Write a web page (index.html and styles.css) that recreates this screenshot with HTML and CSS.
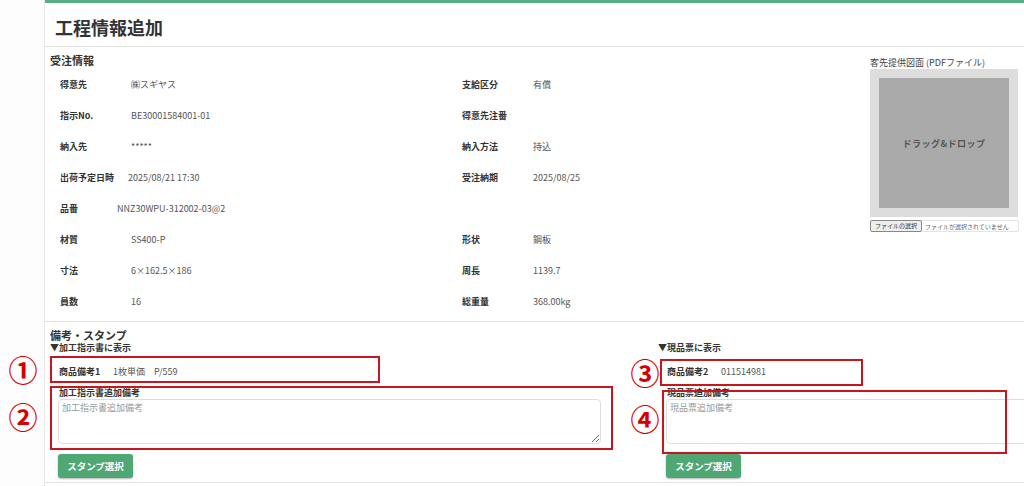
FILE: index.html
```html
<!DOCTYPE html>
<html lang="ja">
<head>
    <meta charset="UTF-8">
    <meta name="viewport" content="width=device-width, initial-scale=1.0">
    <title>工程情報追加</title>
    <link rel="stylesheet" href="styles.css">
</head>
<body>
<div class="page">
    <div class="sidebar"></div>

    <div class="main">
        <div class="header">
            <h1>工程情報追加</h1>
        </div>

        <!-- 受注情報 -->
        <div class="order">
            <div class="order-main">
                <h2>受注情報</h2>
                <div class="fields">
                    <div class="field"><span class="label">得意先</span><span class="val">㈱スギヤス</span></div>
                    <div class="field"><span class="label">支給区分</span><span class="val">有償</span></div>

                    <div class="field"><span class="label">指示No.</span><span class="val">BE30001584001-01</span></div>
                    <div class="field"><span class="label">得意先注番</span><span class="val"></span></div>

                    <div class="field"><span class="label">納入先</span><span class="val">*****</span></div>
                    <div class="field"><span class="label">納入方法</span><span class="val">持込</span></div>

                    <div class="field field-date"><span class="label">出荷予定日時</span><span class="val">2025/08/21 17:30</span></div>
                    <div class="field"><span class="label">受注納期</span><span class="val">2025/08/25</span></div>

                    <div class="field field-part"><span class="label">品番</span><span class="val">NNZ30WPU-312002-03@2</span></div>
                    <div class="field"></div>

                    <div class="field"><span class="label">材質</span><span class="val">SS400-P</span></div>
                    <div class="field"><span class="label">形状</span><span class="val">鋼板</span></div>

                    <div class="field"><span class="label">寸法</span><span class="val">6×162.5×186</span></div>
                    <div class="field"><span class="label">周長</span><span class="val">1139.7</span></div>

                    <div class="field"><span class="label">員数</span><span class="val">16</span></div>
                    <div class="field"><span class="label">総重量</span><span class="val">368.00kg</span></div>
                </div>
            </div>

            <div class="drawing">
                <div class="drawing-title">客先提供図面 (PDFファイル)</div>
                <div class="drop-box">
                    <div class="drop-area">ドラッグ&amp;ドロップ</div>
                </div>
                <div class="file-input">
                    <span class="file-btn">ファイルの選択</span>
                    <span class="file-name">ファイルが選択されていません</span>
                </div>
            </div>
        </div>

        <!-- 備考・スタンプ -->
        <div class="remarks">
            <h2>備考・スタンプ</h2>
            <div class="remark-cols">
                <div class="remark-col remark-left">
                    <div class="sub-title">▼加工指示書に表示</div>
                    <div class="remark-row"><span class="label">商品備考1</span><span class="val">1枚単価　P/559</span></div>
                    <div class="memo-label">加工指示書追加備考</div>
                    <textarea class="memo" placeholder="加工指示書追加備考"></textarea>
                    <button class="stamp-btn">スタンプ選択</button>
                </div>
                <div class="remark-col">
                    <div class="sub-title">▼現品票に表示</div>
                    <div class="remark-row"><span class="label">商品備考2</span><span class="val">011514981</span></div>
                    <div class="memo-label">現品票追加備考</div>
                    <textarea class="memo memo-wide" placeholder="現品票追加備考"></textarea>
                    <button class="stamp-btn">スタンプ選択</button>
                </div>
            </div>
        </div>
    </div>

    <!-- annotation layer -->
    <div class="notes">
        <div class="note-box box1"></div>
        <div class="note-box box2"></div>
        <div class="note-box box3"></div>
        <div class="note-box box4"></div>
        <span class="note-num num1">①</span>
        <span class="note-num num2">②</span>
        <span class="note-num num3">③</span>
        <span class="note-num num4">④</span>
    </div>
</div>
</body>
</html>
```

FILE: styles.css
```css
* {
    margin: 0;
    padding: 0;
    box-sizing: border-box;
}

body {
    font-family: "Noto Sans CJK JP", "Noto Sans", sans-serif;
    background-color: #fff;
    color: #333;
    width: 1024px;
    height: 486px;
    overflow: hidden;
}

.page {
    position: relative;
    display: flex;
    min-height: 486px;
}

.sidebar {
    width: 45px;
    flex-shrink: 0;
    background-color: #fdfdfd;
    border-right: 1px solid #e8e8e8;
}

.main {
    flex: 1;
    min-width: 0;
    overflow: hidden;
    border-top: 3px solid #5aae83;
}

.header {
    height: 44px;
    padding: 5px 0 0 10px;
    border-bottom: 1px solid #e2e2e2;
}

.header h1 {
    font-size: 18px;
    line-height: 38px;
    font-weight: bold;
    color: #333;
}

h2 {
    font-size: 11px;
    line-height: 14px;
    font-weight: bold;
    color: #333;
}

/* order info */
.order {
    display: flex;
    padding: 6px 0 4px 5px;
    border-bottom: 1px solid #e2e2e2;
}

.order-main {
    width: 820px;
}

.order-main h2 {
    margin-bottom: 2px;
}

.fields {
    display: grid;
    grid-template-columns: 402px 1fr;
    grid-auto-rows: 31px;
    padding-left: 10px;
}

.field {
    display: flex;
    align-items: center;
    font-size: 9px;
}

.label {
    width: 71px;
    flex-shrink: 0;
    font-weight: bold;
    color: #333;
}

.val {
    color: #555;
}

.field-date .label {
    width: 68px;
}

.field-part .label {
    width: 57px;
}

.drawing {
    width: 150px;
    padding-top: 4px;
}

.drawing-title {
    font-size: 9px;
    line-height: 12px;
    color: #444;
}

.drop-box {
    width: 148px;
    padding: 9px;
    background-color: #ddd;
}

.drop-area {
    height: 130px;
    background-color: #aaa;
    display: flex;
    align-items: center;
    justify-content: center;
    font-size: 9px;
    font-weight: bold;
    color: #555;
    letter-spacing: 0.5px;
}

.file-input {
    display: flex;
    align-items: center;
    margin-top: 3px;
    width: 149px;
    height: 12px;
    border: 1px solid #e4e4e4;
    border-radius: 2px;
    font-size: 6px;
    color: #666;
}

.file-btn {
    height: 12px;
    line-height: 10px;
    padding: 0 4px;
    margin: -1px 3px 0 -1px;
    background-color: #eee;
    border: 1px solid #888;
    border-radius: 2px;
    color: #333;
}

/* remarks */
.remarks {
    padding: 6px 0 4px 5px;
    border-bottom: 1px solid #e2e2e2;
}

.remark-cols {
    display: flex;
}

.remark-col {
    flex-shrink: 0;
}

.remark-left {
    width: 608px;
}

.sub-title {
    font-size: 9px;
    line-height: 12px;
    font-weight: bold;
    color: #333;
}

.remark-row {
    display: flex;
    align-items: center;
    height: 24px;
    margin-top: 5px;
    padding-left: 9px;
    font-size: 9px;
}

.remark-row .label {
    width: 54px;
}

.memo-label {
    margin-top: 4px;
    font-size: 9px;
    line-height: 12px;
    font-weight: bold;
    color: #333;
    padding-left: 9px;
}

.memo {
    display: block;
    width: 543px;
    height: 45px;
    margin-left: 8px;
    padding: 1px 3px;
    border: 1px solid #ddd;
    border-radius: 4px;
    font-family: inherit;
    font-size: 9px;
    color: #333;
    resize: vertical;
}

.memo::placeholder {
    color: #999;
}

.memo-wide {
    width: 560px;
}

.stamp-btn {
    display: block;
    margin: 10px 0 0 8px;
    width: 75px;
    height: 24px;
    background-color: #4fa874;
    border: none;
    border-radius: 3px;
    box-shadow: 0 1px 2px rgba(0, 0, 0, 0.3);
    color: #fff;
    font-family: inherit;
    font-size: 9.5px;
    font-weight: bold;
    cursor: pointer;
}

/* annotation overlay */
.notes {
    position: absolute;
    top: 0;
    left: 0;
    width: 1024px;
    height: 486px;
    pointer-events: none;
}

.note-box {
    position: absolute;
    border: 2px solid #c8161d;
}

.box1 { left: 50px; top: 356px; width: 330px; height: 27px; }
.box2 { left: 50px; top: 386px; width: 563px; height: 64px; }
.box3 { left: 660px; top: 359px; width: 203px; height: 27px; }
.box4 { left: 662px; top: 390px; width: 345px; height: 64px; }

.note-num {
    position: absolute;
    width: 30px;
    height: 30px;
    line-height: 30px;
    text-align: center;
    font-size: 29px;
    font-weight: bold;
    color: #d40000;
}

.num1 { left: 8px; top: 354px; }
.num2 { left: 8px; top: 401px; }
.num3 { left: 630px; top: 357px; }
.num4 { left: 630px; top: 403px; }
```
